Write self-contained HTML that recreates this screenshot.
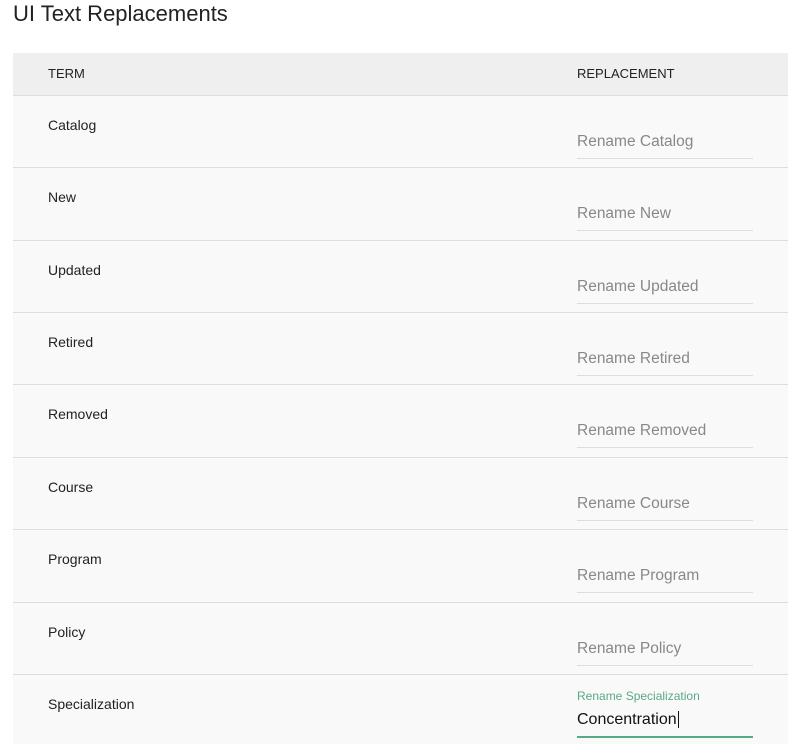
<!DOCTYPE html>
<html><head><style>
body{margin:0;background:#fff;font-family:"Liberation Sans",sans-serif;width:789px;height:744px;overflow:hidden;position:relative}
h1{position:absolute;left:13px;top:0;margin:0;font-weight:normal;font-size:22px;color:#222;line-height:28px}
.hdr{position:absolute;left:13px;top:53px;width:775px;height:42px;background:#efefef;border-bottom:1px solid #ddd;font-size:13px;color:#222}
.hdr span{position:absolute;top:13px}
.row{position:absolute;left:13px;width:775px;background:#f9f9f9;border-bottom:1px solid #ddd}
.t{position:absolute;left:35px;top:21px;font-size:14px;color:#222}
.in{position:absolute;left:564px;top:37px;width:176px;height:25px;border-bottom:1px solid #ddd;font-size:15.5px;color:#888}
</style></head><body>
<h1>UI Text Replacements</h1>
<div class="hdr"><span style="left:35px">TERM</span><span style="left:564px">REPLACEMENT</span></div>
<div class="row" style="top:96px;height:71px"><div class="t">Catalog</div><div class="in">Rename Catalog</div></div>
<div class="row" style="top:168px;height:72px"><div class="t">New</div><div class="in">Rename New</div></div>
<div class="row" style="top:241px;height:71px"><div class="t">Updated</div><div class="in">Rename Updated</div></div>
<div class="row" style="top:313px;height:71px"><div class="t">Retired</div><div class="in">Rename Retired</div></div>
<div class="row" style="top:385px;height:72px"><div class="t">Removed</div><div class="in">Rename Removed</div></div>
<div class="row" style="top:458px;height:71px"><div class="t">Course</div><div class="in">Rename Course</div></div>
<div class="row" style="top:530px;height:72px"><div class="t">Program</div><div class="in">Rename Program</div></div>
<div class="row" style="top:603px;height:71px"><div class="t">Policy</div><div class="in">Rename Policy</div></div>
<div class="row" style="top:675px;height:69px;border:none"><div class="t">Specialization</div>
<div style="position:absolute;left:564px;top:14px;font-size:12px;color:#5aa886">Rename Specialization</div>
<div style="position:absolute;left:564px;top:36px;width:176px;height:25px;border-bottom:2px solid #5aa886;font-size:16px;color:#111">Concentration<span style="border-left:1px solid #111;margin-left:1px"></span></div>
</div>
</body></html>
